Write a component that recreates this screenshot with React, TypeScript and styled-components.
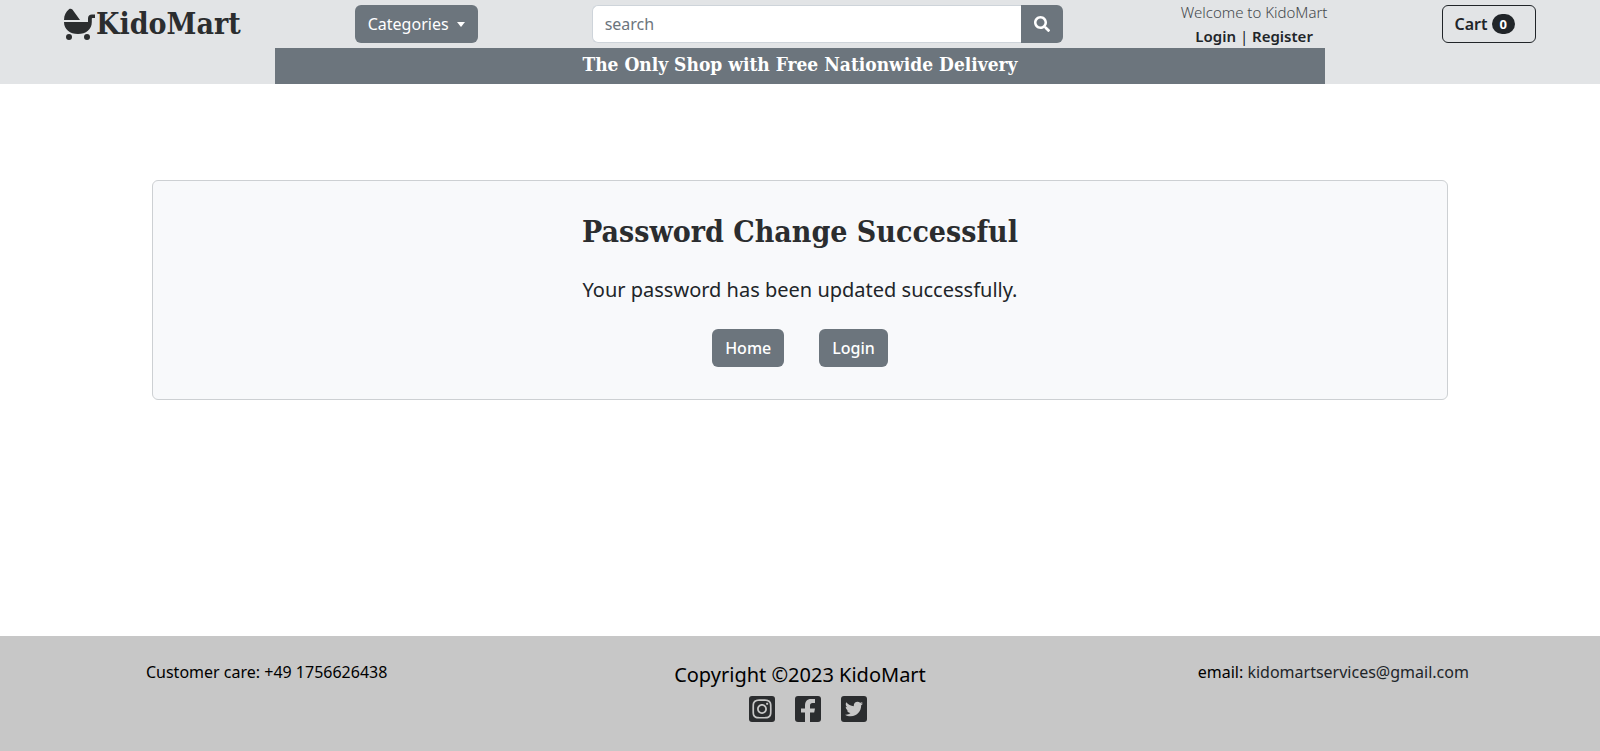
import React from "react";
import styled, { createGlobalStyle } from "styled-components";
import { FaInstagram, FaSearch, FaTwitter } from "react-icons/fa";

const sans = `"Noto Sans", "Open Sans", sans-serif`;
const serif = `"DejaVu Serif Condensed", "DejaVu Serif", "Liberation Serif", serif`;

const GlobalStyle = createGlobalStyle`
  *, *::before, *::after { box-sizing: border-box; }
  body {
    margin: 0;
    background: #fff;
    color: #212529;
    font-family: ${sans};
    font-size: 16px;
    line-height: 24px;
  }
  h1, p { margin: 0; }
  a { color: inherit; text-decoration: none; }
  button, input { font: inherit; }
  svg { display: block; }
`;

const Page = styled.div`
  display: flex;
  flex-direction: column;
  min-height: 100vh;
`;

const Header = styled.header`
  background: #e2e4e6;
`;

const Nav = styled.nav`
  display: flex;
  align-items: center;
  justify-content: space-between;
  gap: 16px;
  height: 48px;
  padding: 0 4%;
`;

const Brand = styled.a`
  display: flex;
  align-items: center;
  color: #2b2d2f;
  font-family: ${serif};
  font-size: 30px;
  font-weight: 700;
  line-height: 40px;
`;

const SolidButton = styled.button`
  display: inline-flex;
  align-items: center;
  gap: 8px;
  height: 38px;
  padding: 0 13px;
  border: 0;
  border-radius: 6px;
  background: #6c757d;
  color: #fff;
  cursor: pointer;
`;

const Caret = styled.span`
  border-top: 5px solid currentColor;
  border-left: 4px solid transparent;
  border-right: 4px solid transparent;
`;

const SearchForm = styled.form`
  display: flex;
  width: 32%;
`;

const SearchInput = styled.input`
  flex: 1;
  min-width: 0;
  height: 38px;
  padding: 0 12px;
  border: 1px solid #ced4da;
  border-right: 0;
  border-radius: 6px 0 0 6px;
  background: #fff;
  color: #212529;
  &::placeholder { color: #6c757d; opacity: 1; }
`;

const SearchButton = styled(SolidButton)`
  border-radius: 0 6px 6px 0;
`;

const Account = styled.div`
  padding-left: 4px;
  text-align: center;
`;

const Welcome = styled.p`
  color: #45494d;
  font-size: 15px;
  font-weight: 300;
`;

const AccountLinks = styled.p`
  font-size: 15px;
  a { font-weight: 600; }
`;

const CartButton = styled.button`
  display: inline-flex;
  align-items: center;
  gap: 4px;
  height: 38px;
  padding: 0 20px 0 12px;
  border: 1px solid #212529;
  border-radius: 6px;
  background: transparent;
  color: #212529;
  font-weight: 600;
  cursor: pointer;
`;

const Badge = styled.span`
  padding: 0 8px;
  border-radius: 10px;
  background: #212529;
  color: #fff;
  font-size: 13px;
  font-weight: 700;
  line-height: 20px;
`;

const Banner = styled.p`
  max-width: 1050px;
  height: 36px;
  margin: 0 auto;
  background: #6c757d;
  color: #fff;
  font-family: ${serif};
  font-size: 19px;
  font-weight: 700;
  line-height: 32px;
  text-align: center;
`;

const Main = styled.main`
  flex: 1;
  width: 100%;
  max-width: 1320px;
  margin: 0 auto;
  padding: 96px 12px;
`;

const Card = styled.section`
  display: flex;
  flex-direction: column;
  align-items: center;
  padding: 31px 16px 32px;
  border: 1px solid #cdd0d3;
  border-radius: 6px;
  background: #f8f9fb;
  text-align: center;
`;

const Title = styled.h1`
  color: #2b2d2f;
  font-family: ${serif};
  font-size: 30px;
  font-weight: 700;
  line-height: 40px;
`;

const Message = styled.p`
  margin: 22px 0 23px;
  font-size: 20px;
  line-height: 32px;
`;

const Actions = styled.div`
  display: flex;
  gap: 35px;
`;

const LinkButton = styled(SolidButton).attrs({ as: "a" })<{ href: string }>`
  font-weight: 500;
`;

const Footer = styled.footer`
  display: grid;
  grid-template-columns: repeat(3, 1fr);
  min-height: 115px;
  padding: 24px 0;
  background: #c7c7c7;
  color: #000;
  text-align: center;
`;

const Email = styled.a`
  color: #212529;
`;

const Copyright = styled.p`
  font-size: 20px;
  line-height: 30px;
`;

const Socials = styled.div`
  display: flex;
  justify-content: center;
  gap: 20px;
  padding: 6px 0 0 16px;
`;

const Carriage = () => (
  <svg width="32" height="32" viewBox="0 0 32 32" fill="#2b2d2f" aria-hidden="true">
    <path d="M0 12C0 7 2 3.5 5 1.2C6 .4 7.6.6 8.4 1.6L16 12z" />
    <path d="M0 14H24V10.500C24 8 25.500 6.500 28 6.500H31V10H28.500C28 10 27.800 10.300 27.800 10.800V14C27.800 21.500 22 26 14 26S0 21.500 0 14z" />
    <circle cx="5" cy="29" r="3" />
    <circle cx="23" cy="29" r="3" />
  </svg>
);

const SocialIcon = ({ children }: { children: React.ReactNode }) => (
  <svg width="26" height="26" viewBox="0 0 26 26" aria-hidden="true">
    <rect width="26" height="26" rx="3" fill="#2b2d2f" />
    {children}
  </svg>
);

export default function App() {
  return (
    <Page>
      <GlobalStyle />
      <Header>
        <Nav>
          <Brand href="#">
            <Carriage />
            KidoMart
          </Brand>
          <SolidButton type="button" aria-haspopup="true">
            Categories <Caret />
          </SolidButton>
          <SearchForm role="search">
            <SearchInput type="text" placeholder="search" aria-label="search" />
            <SearchButton type="submit" aria-label="Submit search">
              <FaSearch />
            </SearchButton>
          </SearchForm>
          <Account>
            <Welcome>Welcome to KidoMart</Welcome>
            <AccountLinks>
              <a href="#login">Login</a> | <a href="#register">Register</a>
            </AccountLinks>
          </Account>
          <CartButton type="button">
            Cart <Badge>0</Badge>
          </CartButton>
        </Nav>
        <Banner>The Only Shop with Free Nationwide Delivery</Banner>
      </Header>
      <Main>
        <Card>
          <Title>Password Change Successful</Title>
          <Message>Your password has been updated successfully.</Message>
          <Actions>
            <LinkButton href="#home">Home</LinkButton>
            <LinkButton href="#login">Login</LinkButton>
          </Actions>
        </Card>
      </Main>
      <Footer>
        <p>Customer care: +49 1756626438</p>
        <div>
          <Copyright>Copyright ©2023 KidoMart</Copyright>
          <Socials>
            <a href="#instagram" aria-label="Instagram">
              <SocialIcon>
                <FaInstagram x={2} y={2} size={22} color="#c7c7c7" />
              </SocialIcon>
            </a>
            <a href="#facebook" aria-label="Facebook">
              <SocialIcon>
                <path
                  fill="#c7c7c7"
                  d="M10 26v-9.500H6v-4h4V9.500C10 5.500 12 3 16 3h4v4h-2.500C15.800 7 15 8 15 9.800v2.700h5l-.8 4H15V26z"
                />
              </SocialIcon>
            </a>
            <a href="#twitter" aria-label="Twitter">
              <SocialIcon>
                <FaTwitter x={4} y={4} size={18} color="#c7c7c7" />
              </SocialIcon>
            </a>
          </Socials>
        </div>
        <p>
          email: <Email href="mailto:kidomartservices@gmail.com">kidomartservices@gmail.com</Email>
        </p>
      </Footer>
    </Page>
  );
}
